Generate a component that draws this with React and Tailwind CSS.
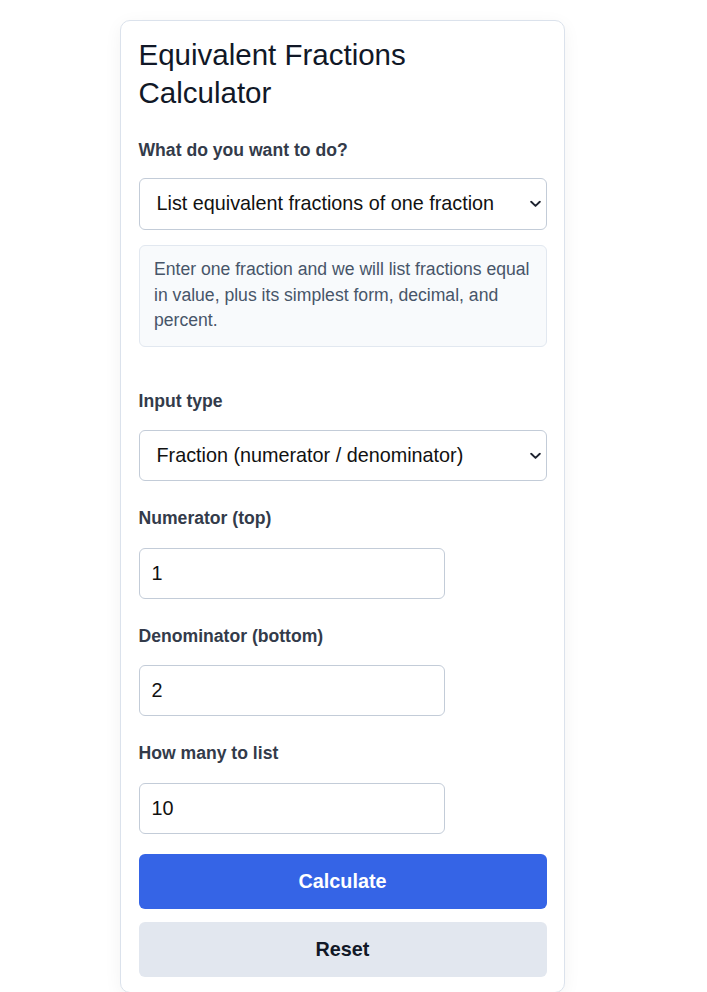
import { useState } from "react";

function Chevron() {
  return (
    <svg
      className="pointer-events-none absolute right-[6px] top-1/2 -translate-y-1/2"
      width="11"
      height="7"
      viewBox="0 0 11 7"
      fill="none"
    >
      <path d="M1.2 1.2 5.5 5.4 9.8 1.2" stroke="#1f2430" strokeWidth="1.9" strokeLinecap="round" strokeLinejoin="round" />
    </svg>
  );
}

function Field({ label, value, onChange, className }) {
  return (
    <div className={className}>
      <label className="block text-[17.6px] leading-[20px] font-bold text-[#333b4a]">{label}</label>
      <input
        type="text"
        value={value}
        onChange={(e) => onChange(e.target.value)}
        className="mt-[19.5px] block h-[51px] w-[306px] rounded-[6px] border border-[#c3ccd8] bg-white pl-[12px] text-[19.8px] text-[#111] outline-none"
      />
    </div>
  );
}

export default function App() {
  const [mode, setMode] = useState("list");
  const [inputType, setInputType] = useState("fraction");
  const [num, setNum] = useState("1");
  const [den, setDen] = useState("2");
  const [count, setCount] = useState("10");

  const reset = () => {
    setNum("1");
    setDen("2");
    setCount("10");
  };

  return (
    <div className="min-h-screen bg-white font-['Liberation_Sans',Arial,sans-serif]">
      <div className="ml-[120px] mt-[20px] w-[445px] rounded-[10px] border border-[#dbe2ec] bg-white px-[17.5px] pt-[15.3px] pb-[15px] shadow-[0_4px_18px_rgba(15,23,42,0.05)]">
        <h1 className="max-w-[380px] text-[29.5px] leading-[37.4px] font-normal text-[#111827]">
          Equivalent Fractions Calculator
        </h1>

        <label className="mt-[28.8px] block text-[17.6px] leading-[20px] font-bold text-[#333b4a]">
          What do you want to do?
        </label>
        <div className="relative mt-[17.7px]">
          <select
            value={mode}
            onChange={(e) => setMode(e.target.value)}
            className="block h-[52px] w-full appearance-none rounded-[6px] border border-[#c3ccd8] bg-white pl-[17px] text-[19.8px] text-[#111] outline-none"
          >
            <option value="list">List equivalent fractions of one fraction</option>
            <option value="check">Check if two fractions are equivalent</option>
          </select>
          <Chevron />
        </div>

        <div className="mt-[15.7px] rounded-[6px] border border-[#e2e8f0] bg-[#f8fafc] px-[14.5px] pt-[11px] pb-[12.4px] text-[17.6px] leading-[25.6px] text-[#475569]">
          Enter one fraction and we will list fractions equal in value, plus its simplest form, decimal, and percent.
        </div>

        <label className="mt-[43.3px] block text-[17.6px] leading-[20px] font-bold text-[#333b4a]">
          Input type
        </label>
        <div className="relative mt-[19.7px]">
          <select
            value={inputType}
            onChange={(e) => setInputType(e.target.value)}
            className="block h-[51px] w-full appearance-none rounded-[6px] border border-[#c3ccd8] bg-white pl-[17px] text-[19.8px] text-[#111] outline-none"
          >
            <option value="fraction">Fraction (numerator / denominator)</option>
            <option value="decimal">Decimal</option>
          </select>
          <Chevron />
        </div>

        <Field className="mt-[26.9px]" label="Numerator (top)" value={num} onChange={setNum} />
        <Field className="mt-[26.9px]" label="Denominator (bottom)" value={den} onChange={setDen} />
        <Field className="mt-[26.9px]" label="How many to list" value={count} onChange={setCount} />

        <button className="mt-[20.7px] block h-[54.7px] w-full rounded-[6px] bg-[#3564e6] text-[19.8px] font-bold text-white">
          Calculate
        </button>
        <button
          onClick={reset}
          className="mt-[13.3px] block h-[54.7px] w-full rounded-[6px] bg-[#e2e7ef] text-[19.8px] font-bold text-[#111827]"
        >
          Reset
        </button>
      </div>
    </div>
  );
}
